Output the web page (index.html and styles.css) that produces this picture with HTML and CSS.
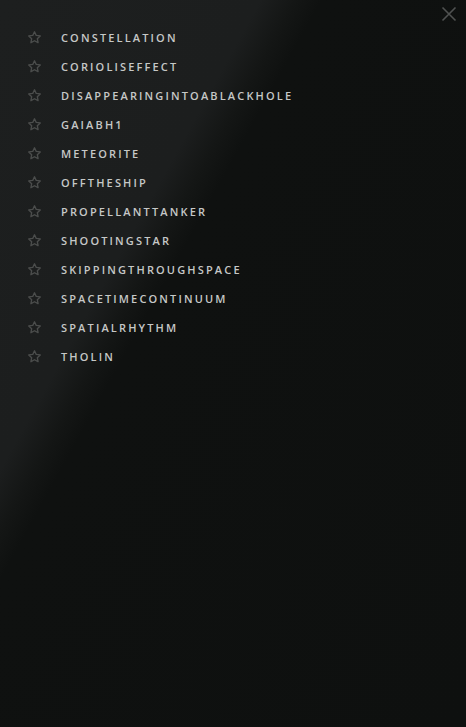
FILE: index.html
```html
<!DOCTYPE html>
<html>
<head>
<meta charset="utf-8">
<link rel="stylesheet" href="styles.css">
</head>
<body>
<div class="panel">
  <button class="close" aria-label="Close">
    <svg width="16" height="16" viewBox="0 0 16 16"><path d="M1.5 1.5 L14.5 14.5 M14.5 1.5 L1.5 14.5" stroke="#505251" stroke-width="1.6" fill="none"/></svg>
  </button>
  <ul class="list">
    <li class="item"><span class="star"><svg viewBox="0 0 24 24"><path d="M12 2.8l2.8 5.9 6.4.8-4.7 4.4 1.2 6.4L12 17.2l-5.7 3.1 1.2-6.4-4.7-4.4 6.4-.8z"/></svg></span><span class="name">CONSTELLATION</span></li>
    <li class="item"><span class="star"><svg viewBox="0 0 24 24"><path d="M12 2.8l2.8 5.9 6.4.8-4.7 4.4 1.2 6.4L12 17.2l-5.7 3.1 1.2-6.4-4.7-4.4 6.4-.8z"/></svg></span><span class="name">CORIOLISEFFECT</span></li>
    <li class="item"><span class="star"><svg viewBox="0 0 24 24"><path d="M12 2.8l2.8 5.9 6.4.8-4.7 4.4 1.2 6.4L12 17.2l-5.7 3.1 1.2-6.4-4.7-4.4 6.4-.8z"/></svg></span><span class="name">DISAPPEARINGINTOABLACKHOLE</span></li>
    <li class="item"><span class="star"><svg viewBox="0 0 24 24"><path d="M12 2.8l2.8 5.9 6.4.8-4.7 4.4 1.2 6.4L12 17.2l-5.7 3.1 1.2-6.4-4.7-4.4 6.4-.8z"/></svg></span><span class="name">GAIABH1</span></li>
    <li class="item"><span class="star"><svg viewBox="0 0 24 24"><path d="M12 2.8l2.8 5.9 6.4.8-4.7 4.4 1.2 6.4L12 17.2l-5.7 3.1 1.2-6.4-4.7-4.4 6.4-.8z"/></svg></span><span class="name">METEORITE</span></li>
    <li class="item"><span class="star"><svg viewBox="0 0 24 24"><path d="M12 2.8l2.8 5.9 6.4.8-4.7 4.4 1.2 6.4L12 17.2l-5.7 3.1 1.2-6.4-4.7-4.4 6.4-.8z"/></svg></span><span class="name">OFFTHESHIP</span></li>
    <li class="item"><span class="star"><svg viewBox="0 0 24 24"><path d="M12 2.8l2.8 5.9 6.4.8-4.7 4.4 1.2 6.4L12 17.2l-5.7 3.1 1.2-6.4-4.7-4.4 6.4-.8z"/></svg></span><span class="name">PROPELLANTTANKER</span></li>
    <li class="item"><span class="star"><svg viewBox="0 0 24 24"><path d="M12 2.8l2.8 5.9 6.4.8-4.7 4.4 1.2 6.4L12 17.2l-5.7 3.1 1.2-6.4-4.7-4.4 6.4-.8z"/></svg></span><span class="name">SHOOTINGSTAR</span></li>
    <li class="item"><span class="star"><svg viewBox="0 0 24 24"><path d="M12 2.8l2.8 5.9 6.4.8-4.7 4.4 1.2 6.4L12 17.2l-5.7 3.1 1.2-6.4-4.7-4.4 6.4-.8z"/></svg></span><span class="name">SKIPPINGTHROUGHSPACE</span></li>
    <li class="item"><span class="star"><svg viewBox="0 0 24 24"><path d="M12 2.8l2.8 5.9 6.4.8-4.7 4.4 1.2 6.4L12 17.2l-5.7 3.1 1.2-6.4-4.7-4.4 6.4-.8z"/></svg></span><span class="name">SPACETIMECONTINUUM</span></li>
    <li class="item"><span class="star"><svg viewBox="0 0 24 24"><path d="M12 2.8l2.8 5.9 6.4.8-4.7 4.4 1.2 6.4L12 17.2l-5.7 3.1 1.2-6.4-4.7-4.4 6.4-.8z"/></svg></span><span class="name">SPATIALRHYTHM</span></li>
    <li class="item"><span class="star"><svg viewBox="0 0 24 24"><path d="M12 2.8l2.8 5.9 6.4.8-4.7 4.4 1.2 6.4L12 17.2l-5.7 3.1 1.2-6.4-4.7-4.4 6.4-.8z"/></svg></span><span class="name">THOLIN</span></li>
  </ul>
</div>
</body>
</html>
```
FILE: styles.css
```css
html, body {
  margin: 0;
  padding: 0;
  height: 100%;
}
body {
  background: #0e100f;
  font-family: "Open Sans", "DejaVu Sans", sans-serif;
}
.panel {
  position: relative;
  height: 727px;
  overflow: hidden;
  background: linear-gradient(119deg, #1d1f1f 0%, #1c1e1e 30%, #141615 34%, #0f1110 37%, #0e100f 100%);
}
.close {
  position: absolute;
  top: 6px;
  right: 9px;
  width: 16px;
  height: 16px;
  padding: 0;
  border: 0;
  background: none;
  display: block;
}
.close svg { display: block; }
.list {
  list-style: none;
  margin: 0;
  padding: 23px 0 0 27px;
  display: flex;
  flex-direction: column;
}
.item {
  height: 29px;
  display: flex;
  align-items: center;
}
.star {
  width: 15px;
  height: 15px;
  display: block;
}
.star svg {
  width: 15px;
  height: 15px;
  display: block;
  fill: none;
  stroke: #4b4d4c;
  stroke-width: 2.2;
  stroke-linejoin: round;
}
.name {
  margin-left: 19px;
  color: #c6c8c7;
  font-size: 11px;
  font-weight: 600;
  letter-spacing: 2.15px;
  line-height: 1;
}
```
